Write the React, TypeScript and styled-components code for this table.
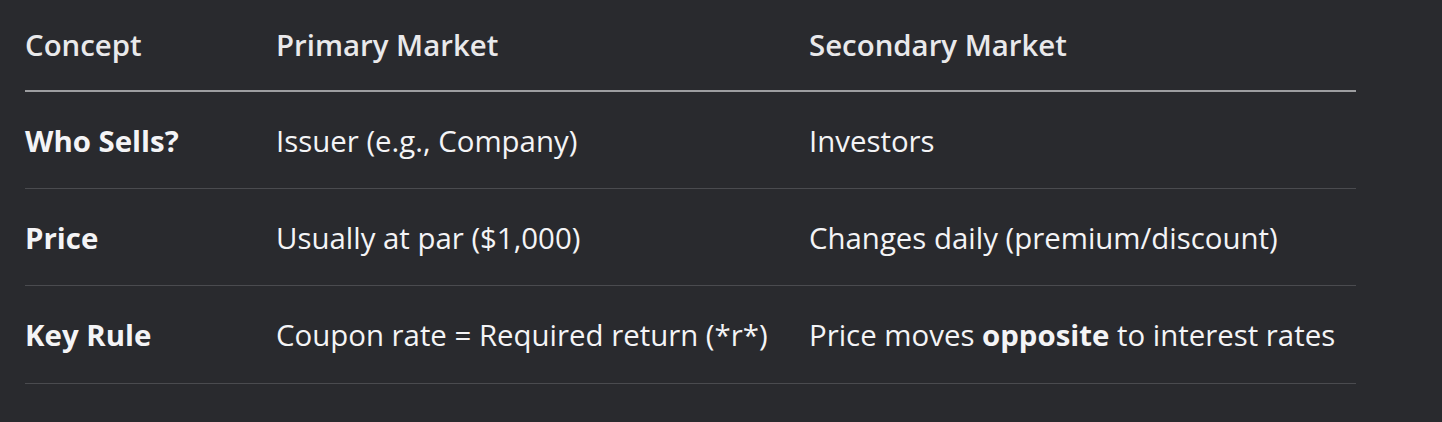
import React from 'react'
import styled, { createGlobalStyle } from 'styled-components'

const GlobalStyle = createGlobalStyle`
  html, body {
    margin: 0;
    padding: 0;
    background: #292a2e;
  }
  body {
    font-family: 'Open Sans', 'Noto Sans', sans-serif;
    color: #f2f2f4;
  }
`

const Page = styled.div`
  padding: 0 86px 0 25px;
  height: 422px;
  box-sizing: border-box;
`

const Table = styled.table`
  width: 1331px;
  border-collapse: collapse;
  table-layout: fixed;
  font-size: 29.4px;
  line-height: 1.3;
`

const HeadCell = styled.th`
  text-align: left;
  font-weight: 600;
  color: #e9e9eb;
  height: 90px;
  padding: 0;
  vertical-align: middle;
  border-bottom: 2px solid #9d9ea1;
`

const Row = styled.tr`
  border-bottom: 1px solid #4a4b4f;
`

const Cell = styled.td<{ $label?: boolean }>`
  height: 94.2px;
  padding: 2px 0 0;
  vertical-align: middle;
  font-weight: ${(p) => (p.$label ? 700 : 400)};
  color: #f4f4f6;
`

const rows = [
  { concept: 'Who Sells?', primary: 'Issuer (e.g., Company)', secondary: <>Investors</> },
  { concept: 'Price', primary: 'Usually at par ($1,000)', secondary: <>Changes daily (premium/discount)</> },
  {
    concept: 'Key Rule',
    primary: 'Coupon rate = Required return (*r*)',
    secondary: (
      <>
        Price moves <b>opposite</b> to interest rates
      </>
    ),
  },
]

const App: React.FC = () => {
  return (
    <>
      <GlobalStyle />
      <Page>
        <Table>
          <colgroup>
            <col style={{ width: '251px' }} />
            <col style={{ width: '533px' }} />
            <col />
          </colgroup>
          <thead>
            <tr>
              <HeadCell>Concept</HeadCell>
              <HeadCell>Primary Market</HeadCell>
              <HeadCell>Secondary Market</HeadCell>
            </tr>
          </thead>
          <tbody>
            {rows.map((r) => (
              <Row key={r.concept}>
                <Cell $label>{r.concept}</Cell>
                <Cell>{r.primary}</Cell>
                <Cell>{r.secondary}</Cell>
              </Row>
            ))}
          </tbody>
        </Table>
      </Page>
    </>
  )
}

export default App
